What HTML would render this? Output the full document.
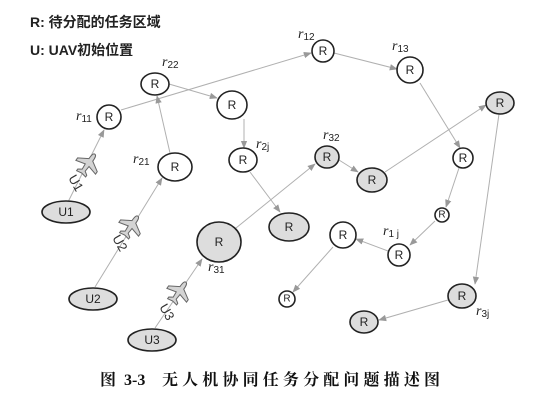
<!DOCTYPE html>
<html><head><meta charset="utf-8"><style>
html,body{margin:0;padding:0;background:#fff;width:533px;height:406px;overflow:hidden}
svg{display:block}
.n{stroke:#222;stroke-width:1.6}
.w{fill:#fff}.g{fill:#ddd}
.e{stroke:#b0b0b0;stroke-width:1;fill:none;marker-end:url(#a)}
.t{font-family:"Liberation Sans",sans-serif;font-size:12px;fill:#222;text-anchor:middle;dominant-baseline:central}
.l{font-family:"Liberation Serif",serif;font-style:italic;font-size:14px;fill:#222}
.l tspan{font-size:10px;font-style:normal;font-family:"Liberation Sans",sans-serif}
.p{fill:#d4d4d4;stroke:#666;stroke-width:1}
</style></head><body>
<svg width="533" height="406" viewBox="0 0 533 406">
<defs><marker id="a" viewBox="0 0 10 10" refX="9" refY="5" markerWidth="8" markerHeight="8" orient="auto"><path d="M0,1 L10,5 L0,9z" fill="#999"/></marker>
<path id="pl" d="M0,-12 C2,-12 2.3,-9 2.3,-5 L12,1 L12,4 L2.3,1.5 L1.8,7.5 L5.5,10 L5.5,12 L0,11 L-5.5,12 L-5.5,10 L-1.8,7.5 L-2.3,1.5 L-12,4 L-12,1 L-2.3,-5 C-2.3,-9 -2,-12 0,-12z"/></defs>
<text x="30" y="27" font-family="Liberation Sans,'Noto Sans CJK SC',sans-serif" font-weight="bold" font-size="14" fill="#222">R: 待分配的任务区域</text>
<text x="30" y="55" font-family="Liberation Sans,'Noto Sans CJK SC',sans-serif" font-weight="bold" font-size="14" fill="#222">U: UAV初始位置</text>
<g class="e">
<path d="M58,222 L104,130"/>
<path d="M121,110 L311,53"/>
<path d="M170,153 L157,96"/>
<path d="M95,287 L162,178"/>
<path d="M169,84 L217,98"/>
<path d="M244,119 L244,148"/>
<path d="M250,172 L280,212"/>
<path d="M155,328 L202,259"/>
<path d="M236,228 L315,164"/>
<path d="M339,160 L358,172"/>
<path d="M385,172 L486,105"/>
<path d="M334,53 L397,69"/>
<path d="M420,83 L460,148"/>
<path d="M459,168 L446,207"/>
<path d="M435,221 L410,245"/>
<path d="M388,251 L356,239"/>
<path d="M333,247 L293,292"/>
<path d="M499,114 L475,284"/>
<path d="M448,300 L379,320"/>
</g>
<g class="n">
<ellipse class="w" cx="109" cy="117" rx="12" ry="12"/>
<ellipse class="w" cx="155" cy="84" rx="14" ry="11"/>
<ellipse class="w" cx="323" cy="51" rx="11" ry="11"/>
<ellipse class="w" cx="410" cy="70" rx="13" ry="13"/>
<ellipse class="g" cx="500" cy="103" rx="14" ry="11"/>
<ellipse class="w" cx="232" cy="105" rx="15" ry="14"/>
<ellipse class="w" cx="243" cy="160" rx="14" ry="12"/>
<ellipse class="w" cx="175" cy="167" rx="17" ry="14"/>
<ellipse class="g" cx="327" cy="157" rx="12" ry="11"/>
<ellipse class="g" cx="372" cy="180" rx="15" ry="12"/>
<ellipse class="w" cx="463" cy="158" rx="10" ry="10"/>
<ellipse class="g" cx="66" cy="212" rx="24" ry="11"/>
<ellipse class="g" cx="289" cy="227" rx="20" ry="14"/>
<ellipse class="w" cx="442" cy="215" rx="7" ry="7"/>
<ellipse class="w" cx="343" cy="235" rx="13" ry="13"/>
<ellipse class="w" cx="399" cy="255" rx="11" ry="11"/>
<ellipse class="g" cx="219" cy="242" rx="22" ry="20"/>
<ellipse class="g" cx="93" cy="299" rx="24" ry="11"/>
<ellipse class="g" cx="462" cy="296" rx="14" ry="12"/>
<ellipse class="w" cx="287" cy="299" rx="8" ry="8"/>
<ellipse class="g" cx="364" cy="322" rx="14" ry="11"/>
<ellipse class="g" cx="152" cy="340" rx="24" ry="11"/>
</g>
<g class="t">
<text x="109" y="117">R</text><text x="155" y="84">R</text><text x="323" y="51">R</text><text x="410" y="70">R</text>
<text x="500" y="103">R</text><text x="232" y="105">R</text><text x="243" y="160">R</text><text x="175" y="167">R</text>
<text x="327" y="157">R</text><text x="372" y="180">R</text><text x="463" y="158">R</text><text x="289" y="227">R</text>
<text x="442" y="215" font-size="10">R</text><text x="343" y="235">R</text><text x="399" y="255">R</text><text x="219" y="242">R</text>
<text x="462" y="296">R</text><text x="287" y="299" font-size="10">R</text><text x="364" y="322">R</text>
<text x="66" y="212">U1</text><text x="93" y="299">U2</text><text x="152" y="340">U3</text>
</g>
<text class="l" x="76" y="120">r<tspan dy="2">11</tspan></text>
<text class="l" x="162" y="66">r<tspan dy="2">22</tspan></text>
<text class="l" x="298" y="38">r<tspan dy="2">12</tspan></text>
<text class="l" x="392" y="50">r<tspan dy="2">13</tspan></text>
<text class="l" x="133" y="163">r<tspan dy="2">21</tspan></text>
<text class="l" x="256" y="148">r<tspan dy="2">2j</tspan></text>
<text class="l" x="323" y="139">r<tspan dy="2">32</tspan></text>
<text class="l" x="208" y="271">r<tspan dy="2">31</tspan></text>
<text class="l" x="383" y="235">r<tspan dy="2">1 j</tspan></text>
<text class="l" x="476" y="315">r<tspan dy="2">3j</tspan></text>
<use href="#pl" class="p" transform="translate(88,164) rotate(35)"/>
<use href="#pl" class="p" transform="translate(131,226) rotate(35)"/>
<use href="#pl" class="p" transform="translate(179,292) rotate(35)"/>
<g font-family="Liberation Sans,sans-serif" font-size="13" fill="#333">
<text transform="translate(76,183) rotate(60)" text-anchor="middle" dominant-baseline="central">U1</text>
<text transform="translate(120,243) rotate(60)" text-anchor="middle" dominant-baseline="central">U2</text>
<text transform="translate(167,312) rotate(60)" text-anchor="middle" dominant-baseline="central">U3</text>
</g>
<g font-family="'Liberation Serif','Noto Serif CJK SC',serif" font-weight="bold" font-size="16" fill="#111">
<text x="100" y="385">图</text>
<text x="124" y="385">3-3</text>
<text x="162" y="385" textLength="278" lengthAdjust="spacing">无人机协同任务分配问题描述图</text>
</g>
</svg>
</body></html>
